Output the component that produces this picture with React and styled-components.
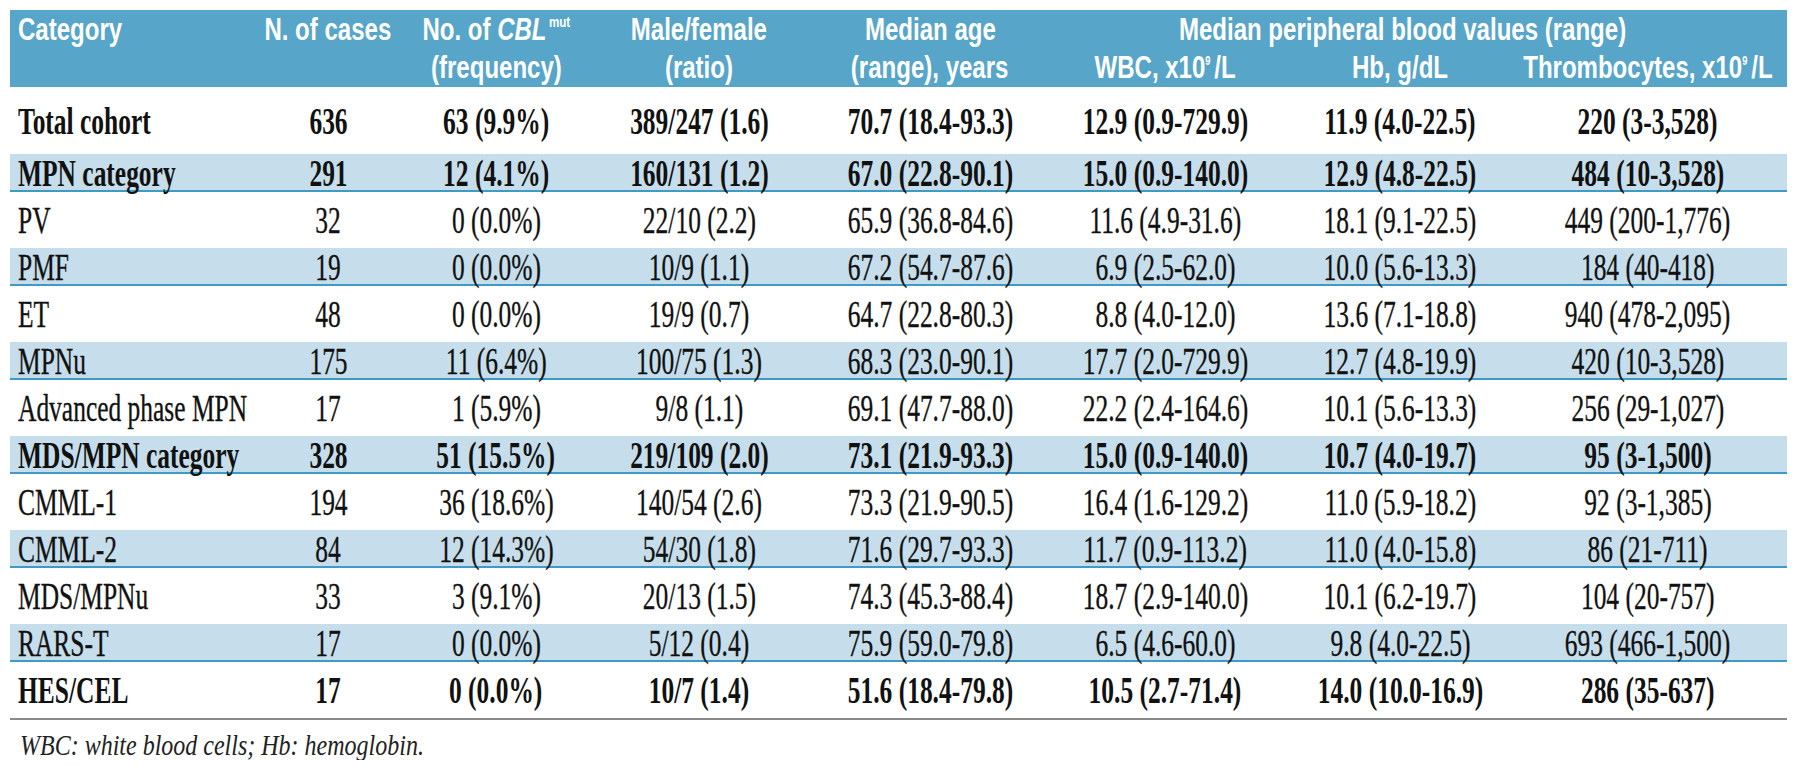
import React from 'react';
import styled, { createGlobalStyle, css } from 'styled-components';

const GlobalStyle = createGlobalStyle`
  body {
    margin: 0;
    background: #ffffff;
  }
`;

const COLS = '240px 156px 180px 226px 236px 234px 236px 269px';

const rows = [
  { name: 'Total cohort', v: ['636', '63 (9.9%)', '389/247 (1.6)', '70.7 (18.4-93.3)', '12.9 (0.9-729.9)', '11.9 (4.0-22.5)', '220 (3-3,528)'], bold: true, kind: 'first' },
  { name: 'MPN category', v: ['291', '12 (4.1%)', '160/131 (1.2)', '67.0 (22.8-90.1)', '15.0 (0.9-140.0)', '12.9 (4.8-22.5)', '484 (10-3,528)'], bold: true, kind: 'band' },
  { name: 'PV', v: ['32', '0 (0.0%)', '22/10 (2.2)', '65.9 (36.8-84.6)', '11.6 (4.9-31.6)', '18.1 (9.1-22.5)', '449 (200-1,776)'], kind: 'plain' },
  { name: 'PMF', v: ['19', '0 (0.0%)', '10/9 (1.1)', '67.2 (54.7-87.6)', '6.9 (2.5-62.0)', '10.0 (5.6-13.3)', '184 (40-418)'], kind: 'band' },
  { name: 'ET', v: ['48', '0 (0.0%)', '19/9 (0.7)', '64.7 (22.8-80.3)', '8.8 (4.0-12.0)', '13.6 (7.1-18.8)', '940 (478-2,095)'], kind: 'plain' },
  { name: 'MPNu', v: ['175', '11 (6.4%)', '100/75 (1.3)', '68.3 (23.0-90.1)', '17.7 (2.0-729.9)', '12.7 (4.8-19.9)', '420 (10-3,528)'], kind: 'band' },
  { name: 'Advanced phase MPN', v: ['17', '1 (5.9%)', '9/8 (1.1)', '69.1 (47.7-88.0)', '22.2 (2.4-164.6)', '10.1 (5.6-13.3)', '256 (29-1,027)'], kind: 'plain' },
  { name: 'MDS/MPN category', v: ['328', '51 (15.5%)', '219/109 (2.0)', '73.1 (21.9-93.3)', '15.0 (0.9-140.0)', '10.7 (4.0-19.7)', '95 (3-1,500)'], bold: true, kind: 'band' },
  { name: 'CMML-1', v: ['194', '36 (18.6%)', '140/54 (2.6)', '73.3 (21.9-90.5)', '16.4 (1.6-129.2)', '11.0 (5.9-18.2)', '92 (3-1,385)'], kind: 'plain' },
  { name: 'CMML-2', v: ['84', '12 (14.3%)', '54/30 (1.8)', '71.6 (29.7-93.3)', '11.7 (0.9-113.2)', '11.0 (4.0-15.8)', '86 (21-711)'], kind: 'band' },
  { name: 'MDS/MPNu', v: ['33', '3 (9.1%)', '20/13 (1.5)', '74.3 (45.3-88.4)', '18.7 (2.9-140.0)', '10.1 (6.2-19.7)', '104 (20-757)'], kind: 'plain' },
  { name: 'RARS-T', v: ['17', '0 (0.0%)', '5/12 (0.4)', '75.9 (59.0-79.8)', '6.5 (4.6-60.0)', '9.8 (4.0-22.5)', '693 (466-1,500)'], kind: 'band' },
  { name: 'HES/CEL', v: ['17', '0 (0.0%)', '10/7 (1.4)', '51.6 (18.4-79.8)', '10.5 (2.7-71.4)', '14.0 (10.0-16.9)', '286 (35-637)'], bold: true, kind: 'plain' },
];

function App() {
  return (
    <Page>
      <GlobalStyle />
      <Table>
        <HeadBand>
          <HeadCell $col="1" $row="1" $align="start">
            <HeadText $align="start">Category</HeadText>
          </HeadCell>
          <HeadCell $col="2" $row="1">
            <HeadText>N. of cases</HeadText>
          </HeadCell>
          <HeadCell $col="3" $row="1">
            <HeadText>No. of <Gene>CBL</Gene><Sup>mut</Sup></HeadText>
          </HeadCell>
          <HeadCell $col="3" $row="2">
            <HeadText>(frequency)</HeadText>
          </HeadCell>
          <HeadCell $col="4" $row="1">
            <HeadText>Male/female</HeadText>
          </HeadCell>
          <HeadCell $col="4" $row="2">
            <HeadText>(ratio)</HeadText>
          </HeadCell>
          <HeadCell $col="5" $row="1">
            <HeadText>Median age</HeadText>
          </HeadCell>
          <HeadCell $col="5" $row="2">
            <HeadText>(range), years</HeadText>
          </HeadCell>
          <HeadCell $col="6 / 9" $row="1" $padRight="30px">
            <HeadText>Median peripheral blood values (range)</HeadText>
          </HeadCell>
          <HeadCell $col="6" $row="2">
            <HeadText>WBC, x10<Exp>9</Exp>/L</HeadText>
          </HeadCell>
          <HeadCell $col="7" $row="2">
            <HeadText>Hb, g/dL</HeadText>
          </HeadCell>
          <HeadCell $col="8" $row="2" $padRight="10px">
            <HeadText>Thrombocytes, x10<Exp>9</Exp>/L</HeadText>
          </HeadCell>
        </HeadBand>

        {rows.map((r) => (
          <Row key={r.name} $kind={r.kind}>
            <Cell $align="start">
              <BodyText $bold={r.bold} $align="start">{r.name}</BodyText>
            </Cell>
            {r.v.map((val, i) => (
              <Cell key={i} $padRight={i === 6 ? '10px' : '0'}>
                <BodyText $bold={r.bold}>{val}</BodyText>
              </Cell>
            ))}
          </Row>
        ))}
      </Table>
      <Rule />
      <Note>
        <NoteText>WBC: white blood cells; Hb: hemoglobin.</NoteText>
      </Note>
    </Page>
  );
}

const Page = styled.div`
  padding: 10px 13px 0 10px;
  width: 1777px;
`;

const Table = styled.div`
  display: flex;
  flex-direction: column;
`;

const HeadBand = styled.div`
  display: grid;
  grid-template-columns: ${COLS};
  grid-template-rows: 38px 38px;
  padding-bottom: 1px;
  background-color: #57a5c8;
`;

const HeadCell = styled.div`
  grid-column: ${(p) => p.$col};
  grid-row: ${(p) => p.$row};
  display: flex;
  align-items: center;
  justify-content: ${(p) => (p.$align === 'start' ? 'flex-start' : 'center')};
  padding-left: ${(p) => (p.$align === 'start' ? '8px' : '0')};
  padding-right: ${(p) => p.$padRight || '0'};
  min-width: 0;
`;

const HeadText = styled.span`
  display: inline-block;
  font-family: 'Liberation Sans', Arial, sans-serif;
  font-weight: 700;
  font-size: 31px;
  line-height: 1;
  color: #ffffff;
  white-space: nowrap;
  transform: scaleX(0.775);
  transform-origin: ${(p) => (p.$align === 'start' ? 'left center' : 'center center')};
`;

const Gene = styled.i`
  font-style: italic;
`;

const Sup = styled.sup`
  font-size: 15px;
  vertical-align: 13px;
  margin-left: 3px;
`;

const Exp = styled.sup`
  font-size: 12px;
  vertical-align: 13px;
  margin-right: 5px;
`;

const rowKinds = {
  first: css`
    height: 67px;
  `,
  band: css`
    height: 36px;
    background-color: #c6deeb;
    border-bottom: 2px solid #3f9bc3;
  `,
  plain: css`
    height: 56px;
  `,
};

const Row = styled.div`
  display: grid;
  grid-template-columns: ${COLS};
  align-items: center;
  ${(p) => rowKinds[p.$kind]}
`;

const Cell = styled.div`
  display: flex;
  align-items: center;
  justify-content: ${(p) => (p.$align === 'start' ? 'flex-start' : 'center')};
  padding-left: ${(p) => (p.$align === 'start' ? '8px' : '0')};
  padding-right: ${(p) => p.$padRight || '0'};
  min-width: 0;
  height: 100%;
`;

const BodyText = styled.span`
  display: inline-block;
  font-family: 'Liberation Serif', 'Times New Roman', serif;
  font-size: 38px;
  line-height: 1;
  font-weight: ${(p) => (p.$bold ? 700 : 400)};
  color: #111111;
  white-space: nowrap;
  -webkit-text-stroke: ${(p) => (p.$bold ? '0' : '0.35px')} #111111;
  transform: scaleX(0.67);
  transform-origin: ${(p) => (p.$align === 'start' ? 'left center' : 'center center')};
`;

const Rule = styled.div`
  height: 2px;
  background-color: #8a8a8a;
`;

const Note = styled.div`
  padding: 10px 0 0 10px;
`;

const NoteText = styled.span`
  display: inline-block;
  font-family: 'Liberation Serif', 'Times New Roman', serif;
  font-style: italic;
  font-size: 30px;
  line-height: 1;
  color: #222222;
  white-space: nowrap;
  transform: scaleX(0.8);
  transform-origin: left center;
`;

export default App;
